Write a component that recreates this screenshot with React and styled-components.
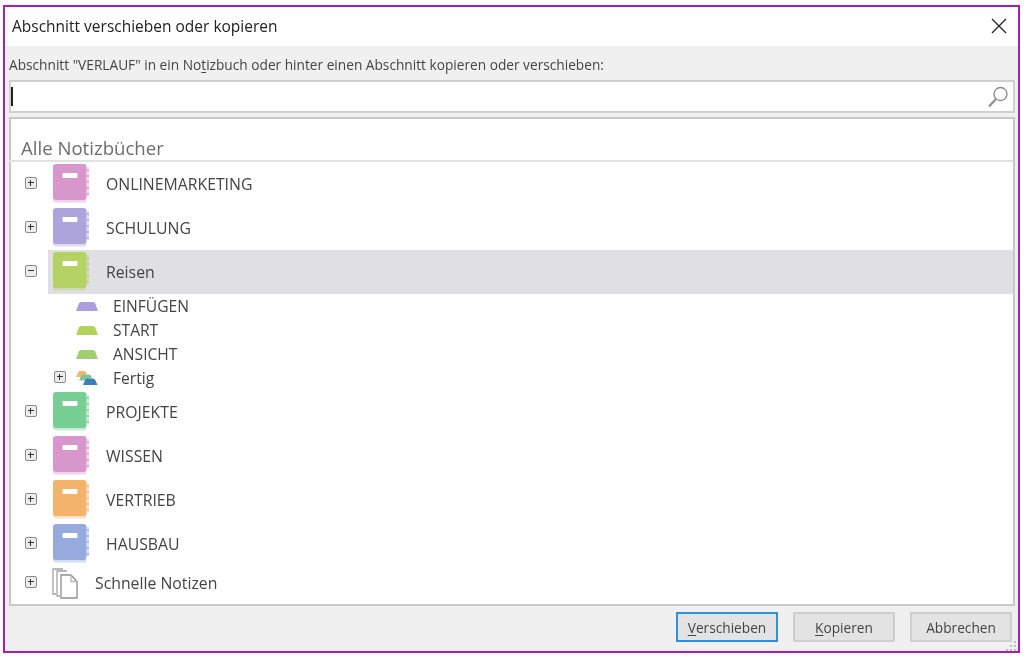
import styled, { createGlobalStyle } from 'styled-components'

const GlobalStyle = createGlobalStyle`
  html, body {
    margin: 0;
    padding: 0;
    background: #fff;
  }
  body {
    font-family: "Open Sans", "Noto Sans", "Liberation Sans", sans-serif;
    color: #3b3b3b;
  }
`

const Page = styled.div`
  width: 1024px;
  height: 657px;
  padding: 5px 4px 4px 3px;
  box-sizing: border-box;
  overflow: hidden;
`

const Dialog = styled.div`
  height: 100%;
  box-sizing: border-box;
  border: 2px solid #a51fb5;
  background: #f0f0f0;
  display: flex;
  flex-direction: column;
  position: relative;
  filter: blur(0.45px);
`

const TitleBar = styled.div`
  height: 39px;
  flex: none;
  background: #fff;
  display: flex;
  align-items: center;
  justify-content: space-between;
  padding: 0 11px 2px 7px;
  box-sizing: border-box;
  font-size: 15.5px;
  color: #222;
`

const CloseButton = styled.button`
  border: 0;
  background: none;
  padding: 0;
  width: 16px;
  height: 16px;
  display: flex;
`

const Body = styled.div`
  flex: 1;
  display: flex;
  flex-direction: column;
  padding: 0 3px 0 4px;
  min-height: 0;
`

const Prompt = styled.div`
  height: 34px;
  flex: none;
  box-sizing: border-box;
  padding-top: 11px;
  font-size: 13.7px;
  line-height: 16px;
  color: #444;
  white-space: nowrap;
`

const Underlined = styled.span`
  text-decoration: underline;
  text-underline-offset: 2px;
`

const SearchBox = styled.div`
  height: 33px;
  flex: none;
  box-sizing: border-box;
  border: 2px solid #d0d0d0;
  background: #fff;
  display: flex;
  align-items: center;
  justify-content: space-between;
  padding: 0 3px 0 0;
  margin-bottom: 4px;
`

const Caret = styled.span`
  width: 2px;
  height: 19px;
  background: #222;
`

const TreePanel = styled.div`
  height: 489px;
  flex: none;
  box-sizing: border-box;
  border: 2px solid #c8c8c8;
  background: #fff;
  display: flex;
  flex-direction: column;
`

const TreeHeading = styled.div`
  height: 43px;
  flex: none;
  box-sizing: border-box;
  margin-left: -2px;
  padding: 17px 0 0 12px;
  border-bottom: 2px solid #e2e2e2;
  font-size: 18.6px;
  line-height: 24px;
  color: #6d6d6d;
`

const Row = styled.div`
  height: ${p => p.$height}px;
  flex: none;
  display: flex;
  align-items: center;
  position: relative;
`

const NotebookRow = styled(Row)`
  padding-left: 14px;
`

const Highlight = styled.div`
  position: absolute;
  left: 37px;
  right: 0;
  top: 0;
  bottom: 0;
  background: ${p => (p.$on ? '#e0dfe4' : 'transparent')};
`

const Toggle = styled.span`
  width: 12px;
  height: 12px;
  flex: none;
  box-sizing: border-box;
  border: 1.5px solid #8a8a8a;
  border-radius: 2px;
  background: #ececec;
  position: relative;
  margin-top: -2px;
  &::before {
    content: '';
    position: absolute;
    left: 2px;
    right: 2px;
    top: 4px;
    height: 1px;
    background: #333;
  }
  &::after {
    content: '';
    display: ${p => (p.$open ? 'none' : 'block')};
    position: absolute;
    top: 2px;
    bottom: 2px;
    left: 4px;
    width: 1px;
    background: #333;
  }
`

const IconSlot = styled.span`
  display: flex;
  flex: none;
  position: relative;
  margin-left: 16px;
`

const QuickIconSlot = styled(IconSlot)`
  margin-left: 15px;
`

const RowLabel = styled.span`
  position: relative;
  margin-left: 17px;
  font-size: 15.8px;
  line-height: 20px;
  color: #444;
  white-space: nowrap;
`

const SectionRow = styled(Row)`
  padding-left: 43px;
`

const SectionToggleSlot = styled.span`
  width: 22px;
  flex: none;
  display: flex;
`

const SectionLabel = styled.span`
  margin-left: 15px;
  font-size: 15.6px;
  line-height: 20px;
  color: #444;
  white-space: nowrap;
`

const Footer = styled.div`
  flex: 1;
  display: flex;
  justify-content: flex-end;
  align-items: flex-start;
  gap: 15px;
  padding: 6px 3px 0 0;
`

const DialogButton = styled.button`
  width: 102px;
  height: 30px;
  box-sizing: border-box;
  border: ${p => (p.$primary ? '2px solid #2f8fdc' : '2px solid #cfcfcf')};
  background: #e3e3e3;
  font-family: inherit;
  font-size: 13.7px;
  color: #444;
  padding: 0;
`

const Grip = styled.svg`
  position: absolute;
  right: 0;
  bottom: 0;
`

// Notizbuch-Icon, nur die Farbe wechselt
const Notebook = ({ color }) => (
  <svg width="36" height="40" viewBox="0 0 36 40">
    <rect x="0" y="0" width="33.500" height="36" rx="3" fill={color} />
    <path d="M0 34h33v4.500H3a3 3 0 0 1-3-3z" fill={color} opacity="0.4" />
    <rect x="9.500" y="9" width="15" height="5" rx="1" fill="#fff" />
    <rect x="33.500" y="3" width="2.500" height="29" fill={color} opacity="0.35" />
    <path d="M33.500 6h2.500M33.500 12h2.500M33.500 18h2.500M33.500 24h2.500M33.500 30h2.500" stroke={color} strokeWidth="1.500" />
  </svg>
)

const SectionTab = ({ color }) => (
  <svg width="22" height="9" viewBox="0 0 22 9">
    <path d="M0 9L2.800 1.500Q3.400 0 5 0h12q1.600 0 2.200 1.500L22 9z" fill={color} />
  </svg>
)

const SectionGroup = () => (
  <svg width="22" height="14" viewBox="0 0 22 14">
    <path d="M0 6L2 1.500Q2.600 0 4 0h4q2 0 3 2.500L8 6z" fill="#f2b46e" />
    <path d="M3 9.500L5 5Q5.600 3.500 7 3.500h6q2 0 3 3L8 9.500z" fill="#7cc79a" />
    <path d="M7 14L9 9Q9.600 7.500 11 7.500h6q1.600 0 2.200 1.500L21.500 14z" fill="#3d7fb8" />
  </svg>
)

const QuickNotes = () => (
  <svg width="26" height="31" viewBox="0 0 26 31" fill="none" stroke="#a3a3a3" strokeWidth="1.300">
    <path d="M4 26H1V1h10" />
    <path d="M8 28H5V3h10" />
    <path d="M9 7h10l6 6.500V30H9z" stroke="#8e8e8e" />
    <path d="M19 7v6.500h6" stroke="#b5b5b5" />
  </svg>
)

const topBooks = [
  { name: 'ONLINEMARKETING', color: '#d797cc' },
  { name: 'SCHULUNG', color: '#aca4db' },
  { name: 'Reisen', color: '#b4d364', open: true },
]

const bottomBooks = [
  { name: 'PROJEKTE', color: '#78cf96' },
  { name: 'WISSEN', color: '#d797cc' },
  { name: 'VERTRIEB', color: '#f3b36c' },
  { name: 'HAUSBAU', color: '#96aade' },
]

const sections = [
  { name: 'EINFÜGEN', color: '#ab9fdd' },
  { name: 'START', color: '#b1d35c' },
  { name: 'ANSICHT', color: '#9fcf6e' },
]

const BookRow = ({ name, color, open }) => (
  <NotebookRow $height={44}>
    <Highlight $on={open} />
    <Toggle $open={open} />
    <IconSlot>
      <Notebook color={color} />
    </IconSlot>
    <RowLabel>{name}</RowLabel>
  </NotebookRow>
)

const App = () => (
  <Page>
    <GlobalStyle />
    <Dialog>
      <TitleBar>
        Abschnitt verschieben oder kopieren
        <CloseButton aria-label="Schließen">
          <svg width="16" height="16" viewBox="0 0 16 16">
            <path d="M1 1l14 14M15 1L1 15" stroke="#222" strokeWidth="1.300" />
          </svg>
        </CloseButton>
      </TitleBar>
      <Body>
        <Prompt>
          Abschnitt "VERLAUF" in ein No<Underlined>t</Underlined>izbuch oder hinter einen Abschnitt kopieren oder verschieben:
        </Prompt>
        <SearchBox>
          <Caret />
          <svg width="24" height="24" viewBox="0 0 24 24" fill="none" stroke="#8a8a8a">
            <circle cx="14.500" cy="9" r="6.500" strokeWidth="1.300" />
            <path d="M10 14L3 21.500" strokeWidth="2" />
          </svg>
        </SearchBox>
        <TreePanel>
          <TreeHeading>Alle Notizbücher</TreeHeading>
          {topBooks.map(book => (
            <BookRow key={book.name} {...book} />
          ))}
          {sections.map(section => (
            <SectionRow key={section.name} $height={24}>
              <SectionToggleSlot />
              <SectionTab color={section.color} />
              <SectionLabel>{section.name}</SectionLabel>
            </SectionRow>
          ))}
          <SectionRow $height={24}>
            <SectionToggleSlot>
              <Toggle />
            </SectionToggleSlot>
            <SectionGroup />
            <SectionLabel>Fertig</SectionLabel>
          </SectionRow>
          {bottomBooks.map(book => (
            <BookRow key={book.name} {...book} />
          ))}
          <NotebookRow $height={34}>
            <Toggle />
            <QuickIconSlot>
              <QuickNotes />
            </QuickIconSlot>
            <RowLabel>Schnelle Notizen</RowLabel>
          </NotebookRow>
        </TreePanel>
        <Footer>
          <DialogButton $primary>
            <Underlined>V</Underlined>erschieben
          </DialogButton>
          <DialogButton>
            <Underlined>K</Underlined>opieren
          </DialogButton>
          <DialogButton>Abbrechen</DialogButton>
        </Footer>
      </Body>
      <Grip width="12" height="12" viewBox="0 0 12 12" fill="#bdbdbd">
        <rect x="8" y="2" width="2" height="2" />
        <rect x="4" y="6" width="2" height="2" />
        <rect x="8" y="6" width="2" height="2" />
        <rect x="0" y="10" width="2" height="2" />
        <rect x="4" y="10" width="2" height="2" />
        <rect x="8" y="10" width="2" height="2" />
      </Grip>
    </Dialog>
  </Page>
)

export default App
